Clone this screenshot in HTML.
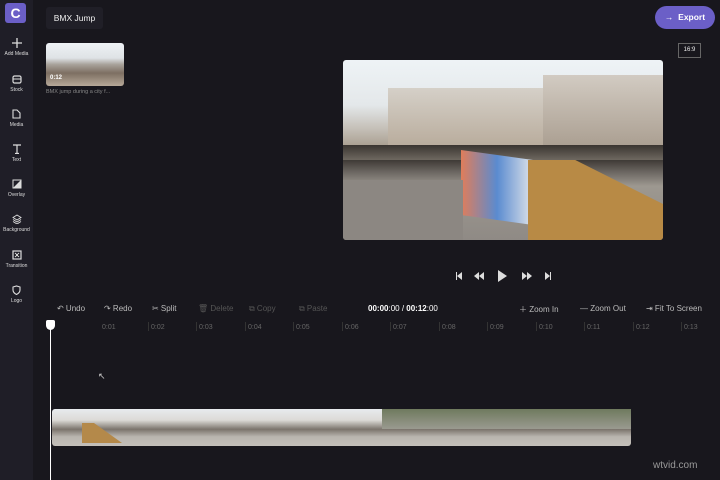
<!DOCTYPE html><html><head><style>
*{margin:0;padding:0;box-sizing:border-box}
body{width:720px;height:480px;background:#18171d;font-family:"Liberation Sans",sans-serif;color:#ddd;position:relative;overflow:hidden}
.a{position:absolute}
.side{left:0;top:0;width:33px;height:480px;background:#1f1e27}
.si{position:absolute;left:0;width:33px;text-align:center;font-size:5px;color:#ddd}
.si svg{display:block;margin:0 auto 3px}
.tb{font-size:8px;color:#bbb;top:304px}
.tb.d{color:#555}
.rl{top:324px;font-size:7px;color:#666}
.tick{top:322px;width:1px;height:9px;background:#333}
</style></head><body>
<div class="a side"></div>
<div class="a" style="left:5px;top:3px;width:21px;height:20px;background:#6b5fc7;border-radius:3px;color:#fff;font-weight:bold;font-size:14px;text-align:center;line-height:20px">C</div>
<div class="si" style="top:38px"><svg width="10" height="10"><path d="M5 0v10M0 5h10" stroke="#ddd" stroke-width="1.3"/></svg>Add Media</div>
<div class="si" style="top:75px"><svg width="10" height="9"><rect x="1" y="1" width="8" height="7" rx="1.5" fill="none" stroke="#ddd" stroke-width="1.2"/><path d="M1 4h8" stroke="#ddd"/></svg>Stock</div>
<div class="si" style="top:109px"><svg width="9" height="10"><path d="M1 1h4l3 3v5H1z" fill="none" stroke="#ddd" stroke-width="1.1"/></svg>Media</div>
<div class="si" style="top:144px"><svg width="10" height="10"><path d="M1 1h8M5 1v9M3 9.5h4" stroke="#ddd" stroke-width="1.2"/></svg>Text</div>
<div class="si" style="top:179px"><svg width="10" height="10"><rect x="1" y="1" width="8" height="8" fill="none" stroke="#ddd"/><path d="M1 9L9 1V9z" fill="#ddd"/></svg>Overlay</div>
<div class="si" style="top:214px"><svg width="10" height="10"><path d="M5 1L9 3.5 5 6 1 3.5z M1 5.5l4 2.5 4-2.5M1 7.5l4 2.5 4-2.5" fill="none" stroke="#ddd" stroke-width=".9"/></svg>Background</div>
<div class="si" style="top:250px"><svg width="10" height="10"><rect x="1" y="1" width="8" height="8" fill="none" stroke="#ddd" stroke-width="1.2"/><path d="M3 3l2 2-2 2M7 3L5 5l2 2" stroke="#ddd"/></svg>Transition</div>
<div class="si" style="top:285px"><svg width="9" height="10"><path d="M1 2l3.5-1 3.5 1v3c0 2-1.5 3.5-3.5 4.5C2.5 8.5 1 7 1 5z" fill="none" stroke="#ddd" stroke-width="1.1"/></svg>Logo</div>

<div class="a" style="left:46px;top:7px;width:57px;height:22px;background:#201f27;border-radius:3px;font-size:8.5px;color:#eee;line-height:22px;text-align:center">BMX Jump</div>
<div class="a" style="left:46px;top:43px;width:78px;height:43px;border-radius:3px;background:linear-gradient(#eef2f5 0,#dfe3e6 35%,#a8a29a 50%,#7d6f62 70%,#b6a898 100%)"></div>
<div class="a" style="left:50px;top:75px;font-size:6px;color:#fff;font-weight:bold">0:12</div>
<div class="a" style="left:46px;top:89px;font-size:5.5px;color:#888">BMX jump during a city f...</div>

<div class="a" style="left:655px;top:6px;width:60px;height:23px;border-radius:12px;background:#6b5fc7;color:#fff;font-size:8.5px;font-weight:bold;line-height:23px;text-align:center">→&nbsp; Export</div>
<div class="a" style="left:678px;top:43px;width:23px;height:15px;border:1px solid #666;font-size:6px;color:#eee;text-align:center;line-height:13px">16:9</div>

<div class="a" style="left:343px;top:60px;width:320px;height:180px;border-radius:3px;overflow:hidden;background:linear-gradient(#eef3f6 0,#e4e8ea 25%,#c5c0b8 38%,#a49888 50%,#3b3632 55%,#6a6560 62%,#9d9890 70%,#8f8a85 100%)">
<div class="a" style="left:45px;top:28px;width:160px;height:60px;background:linear-gradient(#d5d0c8,#b8ab9b)"></div>
<div class="a" style="left:200px;top:15px;width:120px;height:75px;background:linear-gradient(#d2cbc2,#a99d8f)"></div>
<div class="a" style="left:0;top:85px;width:320px;height:15px;background:linear-gradient(#3a3530,#6e6860)"></div>
<div class="a" style="left:118px;top:95px;width:72px;height:65px;background:linear-gradient(90deg,#e07d5a,#5a8bd0,#e0e4ea);transform:skewY(8deg)"></div>
<div class="a" style="left:185px;top:100px;width:135px;height:80px;background:#b88a45;clip-path:polygon(0 0,35% 0,100% 55%,100% 100%,0 100%)"></div>
<div class="a" style="left:0;top:120px;width:120px;height:60px;background:#8c8782"></div>
</div>

<svg class="a" style="left:450px;top:269px" width="106" height="14" fill="#ddd">
<path d="M6 3v8h1V3zM12 3L7 7l5 4z"/>
<path d="M34 3l-5 4 5 4zM29 3l-5 4 5 4z"/>
<path d="M48 1v12l9-6z"/>
<path d="M72 3l5 4-5 4zM77 3l5 4-5 4z"/>
<path d="M95 3l5 4-5 4zM100 3v8h1V3z"/>
</svg>

<div class="a tb" style="left:57px">↶ Undo</div>
<div class="a tb" style="left:104px">↷ Redo</div>
<div class="a tb" style="left:152px">✂ Split</div>
<div class="a tb d" style="left:198px">🗑 Delete</div>
<div class="a tb d" style="left:249px">⧉ Copy</div>
<div class="a tb d" style="left:299px">⧉ Paste</div>
<div class="a tb" style="left:368px;color:#fff"><b>00:00</b>:00 / <b>00:12</b>:00</div>
<div class="a tb" style="left:519px">＋ Zoom In</div>
<div class="a tb" style="left:580px">— Zoom Out</div>
<div class="a tb" style="left:646px">⇥ Fit To Screen</div>

<div class="a rl" style="left:102px">0:01</div><div class="a rl" style="left:151px">0:02</div><div class="a rl" style="left:199px">0:03</div><div class="a rl" style="left:248px">0:04</div><div class="a rl" style="left:296px">0:05</div><div class="a rl" style="left:345px">0:06</div><div class="a rl" style="left:393px">0:07</div><div class="a rl" style="left:442px">0:08</div><div class="a rl" style="left:490px">0:09</div><div class="a rl" style="left:539px">0:10</div><div class="a rl" style="left:587px">0:11</div><div class="a rl" style="left:636px">0:12</div><div class="a rl" style="left:684px">0:13</div>
<div class="a tick" style="left:148px"></div><div class="a tick" style="left:196px"></div><div class="a tick" style="left:245px"></div><div class="a tick" style="left:293px"></div><div class="a tick" style="left:342px"></div><div class="a tick" style="left:390px"></div><div class="a tick" style="left:439px"></div><div class="a tick" style="left:487px"></div><div class="a tick" style="left:536px"></div><div class="a tick" style="left:584px"></div><div class="a tick" style="left:633px"></div><div class="a tick" style="left:681px"></div>

<div class="a" style="left:52px;top:409px;width:579px;height:37px;border-radius:3px;background:linear-gradient(#e8ebee 0,#dcdad6 30%,#7b746c 55%,#b9b5af 75%,#c4c0ba 100%)">
<div class="a" style="left:330px;top:0;width:249px;height:20px;background:linear-gradient(#6f7a5e,#9a9a90)"></div>
<div class="a" style="left:30px;top:14px;width:40px;height:20px;background:#b4894a;clip-path:polygon(0 0,30% 0,100% 100%,0 100%)"></div>
</div>
<div class="a" style="left:50px;top:322px;width:1px;height:158px;background:#fff"></div>
<div class="a" style="left:46px;top:320px;width:9px;height:10px;background:#fff;border-radius:2px 2px 5px 5px"></div>
<div class="a" style="left:98px;top:371px;font-size:9px;color:#ccc">↖</div>
<div class="a" style="left:653px;top:460px;font-size:10px;color:#999">wtvid.com</div>
</body></html>
